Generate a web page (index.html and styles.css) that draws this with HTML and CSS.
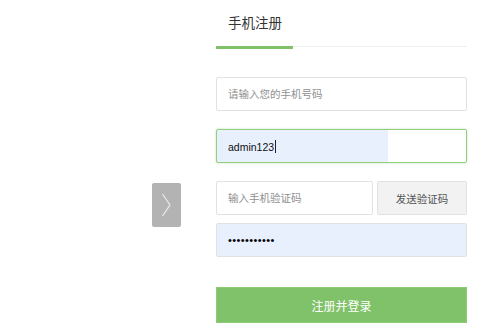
FILE: index.html
```html
<!DOCTYPE html>
<html lang="zh-CN">
<head>
  <meta charset="UTF-8" />
  <meta name="viewport" content="width=device-width, initial-scale=1.0" />
  <title>手机注册</title>
  <link rel="stylesheet" href="styles.css">
</head>
<body>
  <div class="page">
    <button class="slide-next" aria-label="下一页">
      <svg width="29" height="44" viewBox="0 0 29 44"><polyline points="10.5,11 18,22 10.5,33" fill="none" stroke="#ececec" stroke-width="1.2"/></svg>
    </button>

    <div class="panel">
      <div class="tabs">
        <div class="tab active">手机注册</div>
      </div>

      <form class="form" onsubmit="return false">
        <input class="field" type="text" placeholder="请输入您的手机号码" />
        <div class="field field-focus"><span class="autofill">admin123</span><i class="caret"></i></div>
        <div class="code-row">
          <input class="field" type="text" placeholder="输入手机验证码" />
          <button type="button" class="send-btn">发送验证码</button>
        </div>
        <input class="field filled pwd" type="password" value="12345678901" />
        <button class="submit-btn">注册并登录</button>
      </form>
    </div>
  </div>
</body>
</html>
```

FILE: styles.css
```css
:root{--green:#80c269;--line:#e2e2e2}
*,*::before,*::after{box-sizing:border-box;margin:0;padding:0}
body{font-family:"Liberation Sans","Noto Sans CJK SC",sans-serif;background:#fff;color:#333;width:500px;height:332px;overflow:hidden}
.page{display:flex;align-items:flex-start;padding-left:152px}
.slide-next{width:29px;height:44px;margin-top:183px;margin-right:35px;background:#b3b3b3;border:none;border-radius:2px;display:flex;cursor:pointer}
.panel{width:251px}
.tabs{border-bottom:1px solid #eee;padding-top:14px;height:47px}
.tab{display:inline-block;width:77px;padding-left:12px;font-size:13.5px;line-height:20px;height:34px;color:#333}
.tab.active{border-bottom:3px solid var(--green);height:35px;padding-bottom:11px}
.form{display:flex;flex-direction:column;padding-top:30px}
.field{display:flex;align-items:center;width:100%;height:34px;border:1px solid var(--line);border-radius:2px;padding:0 11px;font-family:inherit;font-size:10.5px;color:#111;background:#fff;outline:none}
.field::placeholder{color:#909090}
.field-focus{margin-top:18px;border-color:#93d07d;box-shadow:0 0 2px rgba(128,194,105,.6);background:linear-gradient(to right,#e8f0fe 171px,#fff 171px);padding-top:1px}
.caret{display:inline-block;width:1px;height:13px;background:#222;margin-left:1px}
.code-row{display:flex;gap:4px;margin-top:18px}
.code-row .field{flex:1}
.send-btn{width:90px;height:34px;flex:none;background:#f2f2f2;border:1px solid var(--line);border-radius:2px;font-family:inherit;font-size:10.5px;color:#555;cursor:pointer}
.filled{background:#e8f0fe;margin-top:8px}
.pwd{font-size:11px;letter-spacing:.4px;color:#000}
.submit-btn{margin-top:30px;height:36px;width:100%;background:var(--green);border:1px solid #8ecb78;color:#fff;font-family:inherit;font-size:12px;cursor:pointer}
```
